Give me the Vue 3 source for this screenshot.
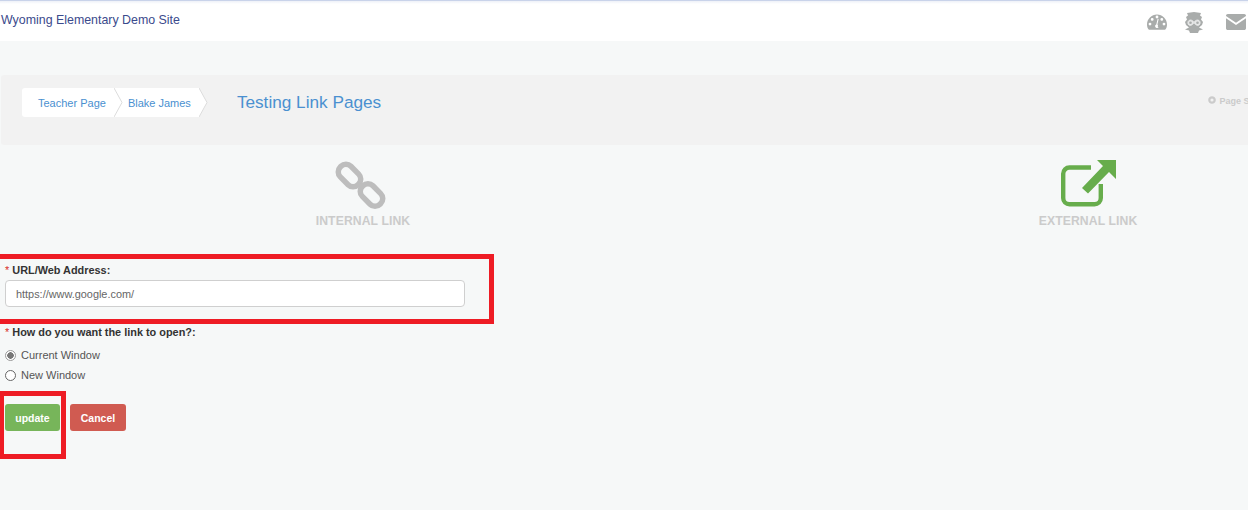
<script setup>
const crumbs = ['Teacher Page', 'Blake James']
</script>

<template>
  <div class="page">
    <header class="topbar">
      <span class="site">Wyoming Elementary Demo Site</span>
      <div class="top-icons">
        <svg class="gauge" width="20" height="16" viewBox="0 0 20 16">
          <path fill="#a9acab" fill-rule="evenodd" d="M10 .5C4.500.5 0 5 0 10.400c0 1.900.5 3.500 1.400 4.900.2.3.4.4.7.4h15.800c.3 0 .5-.1.7-.4.9-1.400 1.400-3 1.400-4.900C20 5 15.500.5 10 .5ZM3 11.500a1.400 1.400 0 1 1 0-2.800 1.400 1.400 0 0 1 0 2.800Zm2.200-4.700a1.400 1.400 0 1 1 0-2.800 1.400 1.400 0 0 1 0 2.800ZM10 4.400A1.400 1.400 0 1 1 10 1.600a1.400 1.400 0 0 1 0 2.800Zm1.700 8.800a2 2 0 0 1-3.600-1.500 2 2 0 0 1 1.200-1.300l1.300-5.300c.2-.7 1.100-.4 1 .2l-1.200 5.300c.7.500.8 1.600.3 2.600Zm3.100-6.400a1.400 1.400 0 1 1 0-2.800 1.400 1.400 0 0 1 0 2.800Zm2.200 4.700a1.400 1.400 0 1 1 0-2.800 1.400 1.400 0 0 1 0 2.800Z"/>
        </svg>
        <svg class="owl" width="20" height="22" viewBox="0 0 20 22">
          <path fill="#a9acab" d="M3 1 10 0 17 1 16 3.500 18 5 17 7.500 19 10 18 13 15 15.500 19 17.500 15 18.500 14 21H6L5 18.500 1 17.500 5 15.500 2 13 1 10 3 7.500 2 5 4 3.500Z"/>
          <path fill="#e6e7e7" stroke="#e6e7e7" stroke-width="1" d="M10 10.500C8.500 8 6.500 7.500 5 8.500 3.500 9.500 3.500 12 5 13 6.500 14 8.500 13 10 10.500 11.500 13 13.500 14 15 13 16.500 12 16.500 9.500 15 8.500 13.500 7.500 11.500 8 10 10.500Z"/>
          <circle cx="6.500" cy="10.700" r="1.300" fill="#a9acab"/>
          <circle cx="13.500" cy="10.700" r="1.300" fill="#a9acab"/>
        </svg>
        <svg class="mail" width="20" height="16" viewBox="0 0 20 16">
          <path fill="#a9acab" d="M1.800 0h16.400C19.200 0 20 .8 20 1.800v.3L10 8.700 0 2.100v-.3C0 .8.800 0 1.800 0ZM0 4.300l10 6.600 10-6.600v9.900c0 1-.8 1.800-1.800 1.800H1.800C.8 16 0 15.200 0 14.200Z"/>
        </svg>
      </div>
    </header>

    <section class="title-panel">
      <nav class="crumbs">
        <a v-for="c in crumbs" :key="c" class="crumb">
          {{ c }}
          <svg class="chev" width="9" height="29" viewBox="0 0 9 29">
            <path d="M0 0 8 14.500 0 29Z" fill="#fff"/>
            <path d="M0 0 8 14.500 0 29" fill="none" stroke="#dcdcdc" stroke-width="1"/>
          </svg>
        </a>
      </nav>
      <h1 class="title">Testing Link Pages</h1>
      <span class="page-s">
        <svg width="8" height="8" viewBox="0 0 8 8">
          <circle cx="4" cy="4" r="2.700" fill="none" stroke="#cbcbcb" stroke-width="2.200"/>
        </svg>
        Page Settings
      </span>
    </section>

    <section class="link-types">
      <div class="link-type">
        <svg width="54" height="54" viewBox="0 0 54 54">
          <g fill="none" stroke="#bdbdbd" stroke-width="5.500">
            <rect x="-12.500" y="-7.500" width="25" height="15" rx="7" transform="translate(13.500 15.500) rotate(45)"/>
            <rect x="-12.500" y="-7.500" width="25" height="15" rx="7" transform="translate(35.500 35) rotate(45)"/>
          </g>
        </svg>
        <span>INTERNAL LINK</span>
      </div>
      <div class="link-type">
        <svg width="54" height="54" viewBox="0 0 54 54">
          <path fill="none" stroke="#67ad4c" stroke-width="4.400" stroke-linejoin="round" d="M30 7.500H8.500a6.300 6.300 0 0 0-6.300 6.300V38a6.300 6.300 0 0 0 6.300 6.300H33.500a6.300 6.300 0 0 0 6.300-6.300V24"/>
          <path fill="#67ad4c" d="M36 0H55V19L48 12 27 33.500 21 28 42 6Z"/>
        </svg>
        <span>EXTERNAL LINK</span>
      </div>
    </section>

    <form class="form" @submit.prevent>
      <div class="field">
        <label class="label"><i>*</i> URL/Web Address:</label>
        <input class="input" type="text" value="https://www.google.com/" />
      </div>
      <div class="field open">
        <label class="label"><i>*</i> How do you want the link to open?:</label>
        <label class="radio"><input type="radio" name="open" checked /> Current Window</label>
        <label class="radio"><input type="radio" name="open" /> New Window</label>
      </div>
      <div class="actions">
        <button class="btn green">update</button>
        <button class="btn red">Cancel</button>
      </div>
    </form>

    <div class="mark mark-url"></div>
    <div class="mark mark-btn"></div>
  </div>
</template>

<style>
html, body { margin: 0; background: #f6f8f8; }
</style>

<style scoped>
.page {
  position: relative;
  width: 1248px;
  height: 510px;
  overflow: hidden;
  background: #f6f8f8;
  font-family: "Liberation Sans", Arial, sans-serif;
}
.topbar {
  height: 41px;
  box-sizing: border-box;
  background: linear-gradient(#eef1f8, #fff 3px);
  border-top: 1px solid #c9d3ea;
  display: flex;
  justify-content: space-between;
  padding: 12px 0 0 1px;
}
.site { font-size: 12.400px; line-height: 14px; color: #3a4a8c; }
.top-icons { display: flex; align-items: flex-start; margin-right: 2px; }
.gauge { margin-top: 1px; }
.owl { margin: -1px 0 0 17px; }
.mail { margin: 1px 0 0 22px; }
.title-panel {
  margin: 34px 0 0 1px;
  height: 70px;
  width: 1300px;
  background: #f2f2f2;
  border-radius: 3px;
  display: flex;
  align-items: flex-start;
  position: relative;
}
.crumbs { display: flex; margin: 13px 0 0 21px; height: 29px; }
.crumb {
  position: relative;
  display: flex;
  align-items: center;
  height: 29px;
  background: #fff;
  color: #4a90d0;
  font-size: 11px;
  white-space: nowrap;
}
.crumb:first-child { padding: 0 8px 0 16px; border-radius: 3px 0 0 3px; }
.crumb:last-child { padding: 0 8px 0 14px; }
.chev { position: absolute; left: 100%; top: 0; z-index: 1; }
.title {
  margin: 18px 0 0 38px;
  font-size: 17.200px;
  line-height: 19px;
  font-weight: 400;
  color: #4a90d0;
}
.page-s {
  position: absolute;
  left: 1207px;
  top: 21px;
  font-size: 9px;
  font-weight: 700;
  color: #cbcbcb;
  white-space: nowrap;
}
.page-s svg { margin-right: 1px; }
.link-types {
  display: grid;
  grid-template-columns: 725px 725px;
  width: 1450px;
  margin: 15px 0 0 .5px;
}
.link-type { display: flex; flex-direction: column; align-items: center; }
.link-type svg { display: block; overflow: visible; }
.link-type span {
  font-size: 12.200px;
  line-height: 14px;
  font-weight: 700;
  color: #cbcbcb;
  letter-spacing: .1px;
}
.form { margin: 36px 0 0 5px; }
.label {
  display: block;
  font-size: 10.900px;
  line-height: 13px;
  font-weight: 700;
  color: #333;
}
.label i { color: #d9312b; font-style: normal; font-weight: 400; }
.input {
  display: block;
  box-sizing: border-box;
  width: 460px;
  height: 27px;
  margin-top: 3px;
  padding: 0 10px;
  border: 1px solid #cfcfcf;
  border-radius: 4px;
  background: #fff;
  font: 10.900px "Liberation Sans", Arial, sans-serif;
  color: #666;
  outline: none;
}
.open { margin-top: 19px; }
.open .label { margin-bottom: 6px; }
.radio {
  display: flex;
  align-items: center;
  gap: 5px;
  height: 20px;
  font-size: 11px;
  color: #555;
}
.radio input {
  appearance: none;
  box-sizing: border-box;
  width: 11px;
  height: 11px;
  margin: 0;
  border: 1px solid #666;
  border-radius: 50%;
  background: #fff;
}
.radio input:checked { background: radial-gradient(circle, #777 0 3px, #fff 3.500px); border-color: #999; }
.actions { display: flex; gap: 10px; margin-top: 19px; }
.btn {
  height: 27px;
  border: 0;
  border-radius: 3px;
  color: #fff;
  font: 700 10.500px "Liberation Sans", Arial, sans-serif;
  padding: 0;
}
.green { width: 55px; background: #77b55a; }
.red { width: 56px; background: #d05b51; }
.mark { position: absolute; box-sizing: border-box; border: 5px solid #ee1c25; }
.mark-url { left: -10px; top: 254px; width: 504px; height: 70px; }
.mark-btn { left: -1px; top: 391px; width: 67px; height: 68px; }
</style>
